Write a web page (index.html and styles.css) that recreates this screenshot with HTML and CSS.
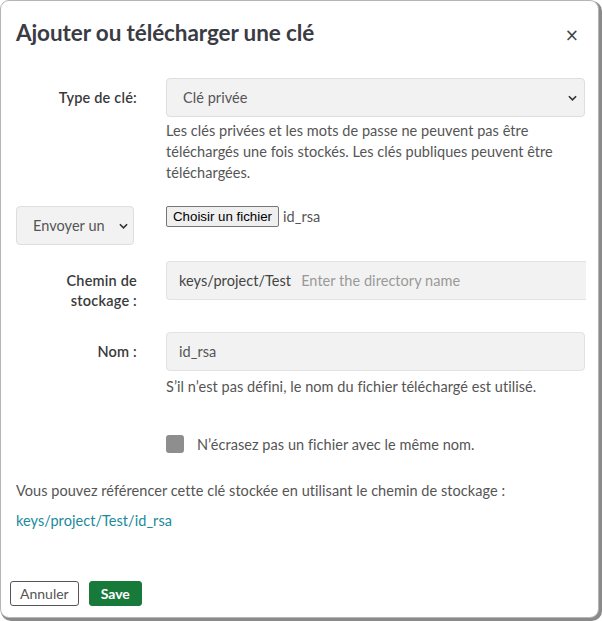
FILE: index.html
```html
<!DOCTYPE html>
<html lang="fr">
<head>
<meta charset="utf-8">
<title>Ajouter ou télécharger une clé</title>
<link rel="stylesheet" href="styles.css">
</head>
<body>
<div class="dialog">
  <div class="header">
    <h1 class="title">Ajouter ou télécharger une clé</h1>
    <span class="close">×</span>
  </div>
  <div class="body">
    <div class="row row-type">
      <div class="label">Type de clé:</div>
      <div class="control">
        <div class="select select-wide"><span>Clé privée</span><svg class="chev" viewBox="0 0 10 6" width="9" height="6"><path d="M1 1l4 4 4-4" fill="none" stroke="#333" stroke-width="1.8"/></svg></div>
        <p class="help help-type">Les clés privées et les mots de passe ne peuvent pas être<br>téléchargés une fois stockés. Les clés publiques peuvent être<br>téléchargées.</p>
      </div>
    </div>
    <div class="row row-file">
      <div class="label-box">
        <div class="select select-small"><span>Envoyer un</span><svg class="chev" viewBox="0 0 10 6" width="9" height="6"><path d="M1 1l4 4 4-4" fill="none" stroke="#333" stroke-width="1.8"/></svg></div>
      </div>
      <div class="control file-line">
        <span class="file-btn">Choisir un fichier</span><span class="file-name">id_rsa</span>
      </div>
    </div>
    <div class="row row-path">
      <div class="label">Chemin de<br>stockage :</div>
      <div class="control">
        <div class="input input-path"><span class="prefix">keys/project/Test</span><span class="placeholder">Enter the directory name</span></div>
      </div>
    </div>
    <div class="row row-name">
      <div class="label">Nom :</div>
      <div class="control">
        <div class="input input-name">id_rsa</div>
        <p class="help help-name">S’il n’est pas défini, le nom du fichier téléchargé est utilisé.</p>
      </div>
    </div>
    <div class="row row-check">
      <div class="label"></div>
      <div class="control check-line">
        <span class="checkbox"></span><span class="check-label">N’écrasez pas un fichier avec le même nom.</span>
      </div>
    </div>
    <p class="note">Vous pouvez référencer cette clé stockée en utilisant le chemin de stockage :</p>
    <a class="link" href="#">keys/project/Test/id_rsa</a>
  </div>
  <div class="footer">
    <button class="btn btn-cancel">Annuler</button>
    <button class="btn btn-save">Save</button>
  </div>
</div>
</body>
</html>
```
FILE: styles.css
```css
* { box-sizing: border-box; }
html, body { margin: 0; padding: 0; }
body {
  background: #ffffff;
  width: 602px;
  height: 621px;
  overflow: hidden;
  font-family: "Lato", "Liberation Sans", sans-serif;
  font-size: 14.5px;
  letter-spacing: 0.05px;
  color: #555;
}
.dialog {
  width: 599px;
  height: 618px;
  border: 1px solid #b5b5b5;
  border-radius: 9px;
  box-shadow: 2px 2px 0 1px #8a8a8a;
  background: #fff;
  display: flex;
  flex-direction: column;
  padding: 0 15px 0 15px;
}
.header {
  display: flex;
  justify-content: space-between;
  align-items: flex-start;
  height: 77px;
  padding-top: 18px;
}
.title {
  margin: 0;
  font-size: 22.5px;
  font-weight: 700;
  color: #3b3b44;
  letter-spacing: -0.1px;
}
.close {
  font-size: 17px;
  line-height: 20px;
  color: #444;
  margin-right: 4px;
  margin-top: 6px;
  font-family: "DejaVu Sans", sans-serif;
  letter-spacing: 0;
}
.body { flex: 1; }
.row {
  display: grid;
  grid-template-columns: 121px 419px;
  column-gap: 29px;
}
.label {
  text-align: right;
  font-weight: 600;
  font-size: 14.5px;
  letter-spacing: 0.2px;
  color: #3a3a3a;
  padding-top: 10px;
  line-height: 20px;
}
.select {
  display: flex;
  align-items: center;
  justify-content: space-between;
  background: #f2f2f2;
  border: 1px solid #dedede;
  border-radius: 4px;
  color: #555;
}
.select-wide { height: 39px; padding: 0 7px 0 16px; }
.select-small { height: 39px; width: 118px; padding: 0 5px 0 16px; }
.chev { display: block; }
.help {
  margin: 3px 0 0 0;
  line-height: 21px;
  color: #555;
}
.row-file { margin-top: 23px; }
.file-line { display: flex; align-items: center; align-self: start; height: 21px; }
.file-btn {
  font-family: "Liberation Sans", sans-serif;
  font-size: 13.3px;
  letter-spacing: 0;
  color: #000;
  background: #efefef;
  border: 1px solid #767676;
  border-radius: 2px;
  height: 21px;
  line-height: 19px;
  padding: 0 6px;
}
.file-name { margin-left: 4px; color: #555; }
.row-path { margin-top: 16px; }
.input {
  height: 39px;
  background: #f2f2f2;
  border: 1px solid #e2e2e2;
  border-radius: 4px;
  display: flex;
  align-items: center;
  padding-left: 12px;
  color: #555;
}
.input-path { border-right: none; border-radius: 4px 0 0 4px; width: 420px; }
.prefix { color: #444; }
.placeholder { color: #999; margin-left: 10px; }
.row-name { margin-top: 21px; }
.help-name { margin-top: 5px; }
.row-check { margin-top: 38px; }
.check-line { display: flex; align-items: center; height: 18px; }
.checkbox {
  width: 18px;
  height: 18px;
  border-radius: 3px;
  background: #8e8e8e;
  display: inline-block;
}
.check-label { margin-left: 13px; color: #555; }
.note { margin: 28px 0 0 0; line-height: 20px; }
.link {
  display: inline-block;
  margin-top: 10px;
  color: #1a8a9c;
  text-decoration: none;
  line-height: 20px;
}
.footer {
  display: flex;
  gap: 10px;
  padding: 0 0 11px 0;
  margin-left: -6px;
}
.btn {
  height: 25px;
  font-family: "Lato", "Liberation Sans", sans-serif;
  font-size: 14px;
  letter-spacing: 0;
  border-radius: 3px;
  padding: 0 9px;
  cursor: pointer;
}
.btn-cancel {
  background: #fff;
  border: 1px solid #555;
  color: #555;
}
.btn-save {
  background: #187a3a;
  border: 1px solid #187a3a;
  color: #fff;
  font-weight: 700;
  padding: 0 11px;
}
```
